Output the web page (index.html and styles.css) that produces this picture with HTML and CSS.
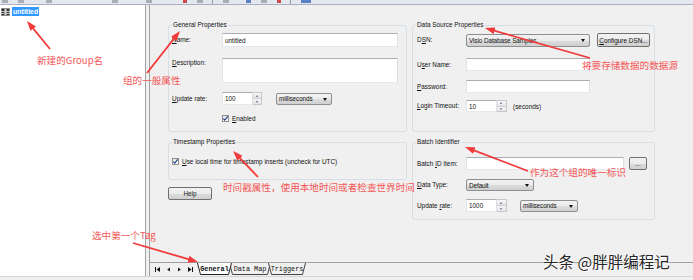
FILE: index.html
```html
<!DOCTYPE html>
<html lang="zh-CN">
<head>
  <meta charset="UTF-8">
  <meta name="viewport" content="width=device-width, initial-scale=1.0">
  <title>Group Properties</title>
  <link rel="stylesheet" href="styles.css">
</head>
<body>
<div class="app">
  <!-- toolbar, only its bottom edge is in view -->
  <div class="toolbar">
    <span class="tb"></span><span class="tb"></span><span class="tb"></span><span class="tb"></span>
    <span class="tb"></span><span class="tb red"></span><span class="tb"></span><span class="tb-sep"></span>
    <span class="tb"></span><span class="tb blue"></span><span class="tb"></span><span class="tb red"></span>
    <span class="tb-sep"></span><span class="tb blue wide"></span>
  </div>

  <div class="main">
    <div class="tree">
      <div class="node">
        <svg class="node-icon" width="9" height="8" viewBox="0 0 9 8">
          <rect x="0" y="0" width="9" height="8" fill="#8a8a8a"/>
          <rect x="1" y="1" width="2" height="6" fill="#222"/>
          <rect x="4" y="1" width="1" height="6" fill="#e0e0e0"/>
          <rect x="6" y="1" width="2" height="6" fill="#333"/>
          <rect x="0" y="3" width="9" height="1" fill="#cfcfcf"/>
          <rect x="0" y="5" width="9" height="1" fill="#bdbdbd"/>
        </svg>
        <span class="node-label">untitled</span>
      </div>
    </div>

    <div class="panel">
      <div class="form">
        <div class="col col-left">
          <div class="group general">
            <span class="group-title">General Properties</span>
            <div class="row r-name">
              <span class="lbl lbl-g"><u>N</u>ame:</span>
              <div class="field w-name">untitled</div>
            </div>
            <div class="row r-desc">
              <span class="lbl lbl-g"><u>D</u>escription:</span>
              <div class="field w-desc"></div>
            </div>
            <div class="row r-rate">
              <span class="lbl lbl-g"><u>U</u>pdate rate:</span>
              <div class="field w-num">100</div>
              <div class="spin"><span class="up"></span><span class="down"></span></div>
              <div class="combo w-ms">milliseconds</div>
            </div>
            <div class="row r-enabled">
              <span class="check">
                <svg width="7" height="7" viewBox="0 0 7 7"><path d="M1.3 3.6 L2.8 5.2 L5.7 1.4" fill="none" stroke="#21418a" stroke-width="1.1"/></svg>
              </span>
              <span class="check-text"><u>E</u>nabled</span>
            </div>
          </div>

          <div class="group timestamp">
            <span class="group-title">Timestamp Properties</span>
            <div class="row r-local">
              <span class="check">
                <svg width="7" height="7" viewBox="0 0 7 7"><path d="M1.3 3.6 L2.8 5.2 L5.7 1.4" fill="none" stroke="#21418a" stroke-width="1.1"/></svg>
              </span>
              <span class="check-text"><u>U</u>se local time for timestamp inserts (uncheck for UTC)</span>
            </div>
          </div>

          <div class="btn help">Help</div>
        </div>

        <div class="col col-right">
          <div class="group dsn">
            <span class="group-title">Data Source Properties</span>
            <div class="row r-dsn">
              <span class="lbl lbl-r">D<u>S</u>N:</span>
              <div class="combo w-dsn">Visio Database Samples</div>
              <div class="btn w-cfg"><u>C</u>onfigure DSN...</div>
            </div>
            <div class="row r-user">
              <span class="lbl lbl-r">U<u>s</u>er Name:</span>
              <div class="field w-wide"></div>
            </div>
            <div class="row r-pass">
              <span class="lbl lbl-r"><u>P</u>assword:</span>
              <div class="field w-wide"></div>
            </div>
            <div class="row r-login">
              <span class="lbl lbl-r"><u>L</u>ogin Timeout:</span>
              <div class="field w-num">10</div>
              <div class="spin wide"><span class="up"></span><span class="down"></span></div>
              <span class="unit">(seconds)</span>
            </div>
          </div>

          <div class="group batch">
            <span class="group-title">Batch Identifier</span>
            <div class="row r-batch">
              <span class="lbl lbl-r">Batch <u>I</u>D Item:</span>
              <div class="field w-batch"></div>
              <div class="btn w-dots">...</div>
            </div>
            <div class="row r-type">
              <span class="lbl lbl-r"><u>D</u>ata Type:</span>
              <div class="combo w-type">Default</div>
            </div>
            <div class="row r-rate2">
              <span class="lbl lbl-r">Update <u>r</u>ate:</span>
              <div class="field w-num">1000</div>
              <div class="spin wide"><span class="up"></span><span class="down"></span></div>
              <div class="combo w-ms2">milliseconds</div>
            </div>
          </div>
        </div>
      </div>

      <div class="tabbar">
        <div class="nav">
          <svg width="5" height="5" viewBox="0 0 5 5"><rect x="0" y="0" width="1" height="5" fill="#111"/><path d="M5 0 L1.5 2.5 L5 5 Z" fill="#111"/></svg>
          <svg width="5" height="5" viewBox="0 0 5 5"><path d="M4 0.5 L1.2 2.5 L4 4.5 Z" fill="#111"/></svg>
          <svg width="5" height="5" viewBox="0 0 5 5"><path d="M1 0.5 L3.8 2.5 L1 4.5 Z" fill="#111"/></svg>
          <svg width="5" height="5" viewBox="0 0 5 5"><path d="M0 0 L3.5 2.5 L0 5 Z" fill="#111"/><rect x="4" y="0" width="1" height="5" fill="#111"/></svg>
        </div>
        <div class="tabs">
          <div class="tab active t-general">
            <svg class="tab-shape" width="35" height="12" viewBox="0 0 35 12"><path d="M0.5 0 L3.5 11.5 L31.5 11.5 L34.5 0" fill="#fff" stroke="#222"/></svg>
            <span class="tab-text">General</span>
          </div>
          <div class="tab t-map">
            <svg class="tab-shape" width="42" height="12" viewBox="0 0 42 12"><path d="M0.5 0 L3.5 11.5 L38.5 11.5 L41.5 0" fill="#f0f0f0" stroke="#444"/></svg>
            <span class="tab-text">Data Map</span>
          </div>
          <div class="tab t-trig">
            <svg class="tab-shape" width="38" height="12" viewBox="0 0 38 12"><path d="M0.5 0 L3.5 11.5 L34.5 11.5 L37.5 0" fill="#f0f0f0" stroke="#444"/></svg>
            <span class="tab-text">Triggers</span>
          </div>
        </div>
      </div>
    </div>
  </div>

  <div class="status"></div>

  <!-- red annotations drawn on top of the screenshot -->
  <svg class="arrows" width="693" height="280" viewBox="0 0 693 280">
    <defs>
      <marker id="head" markerUnits="userSpaceOnUse" markerWidth="10" markerHeight="7" refX="6" refY="3.5" orient="auto" viewBox="0 0 10 7">
        <path d="M0 0 L10 3.5 L0 7 Z" fill="#f23a3a"/>
      </marker>
    </defs>
    <line x1="50" y1="49" x2="29.5" y2="24.1" marker-end="url(#head)"/>
    <line x1="147" y1="73" x2="177.5" y2="34.1" marker-end="url(#head)"/>
    <line x1="590" y1="58" x2="488.8" y2="29.1" marker-end="url(#head)"/>
    <line x1="258" y1="177" x2="235.8" y2="153.9" marker-end="url(#head)"/>
    <line x1="528" y1="171" x2="468.7" y2="148.4" marker-end="url(#head)"/>
    <line x1="133" y1="243" x2="194.2" y2="260.9" marker-end="url(#head)"/>
  </svg>

  <span class="note n-group">新建的Group名</span>
  <span class="note n-general">组的一般属性</span>
  <span class="note n-source">将要存储数据的数据源</span>
  <span class="note n-time">时间戳属性，使用本地时间或者检查世界时间</span>
  <span class="note n-batch">作为这个组的唯一标识</span>
  <span class="note n-tag">选中第一个Tag</span>

  <span class="watermark">头条 @胖胖编程记</span>
</div>
</body>
</html>
```

FILE: styles.css
```css
body {
  margin: 0;
  background: #f0f0f0;
  font-family: "Liberation Sans", Arial, sans-serif;
  font-size: 6.4px;
  color: #111;
}
.app {
  position: relative;
  width: 693px;
  height: 280px;
  overflow: hidden;
  display: flex;
  flex-direction: column;
}

/* toolbar strip */
.toolbar {
  height: 4px;
  background: #e3e7ef;
  border-bottom: 1px solid #a9b0bd;
  display: flex;
  align-items: flex-start;
}
.tb {
  width: 6px;
  height: 3px;
  background: #a8adb6;
  margin-left: 10px;
}
.tb.red { background: #d04848; width: 4px; }
.tb.blue { background: #5a7fc4; width: 5px; }
.tb.wide { width: 10px; }
.tb-sep {
  width: 1px;
  height: 4px;
  background: #9aa1ad;
  margin-left: 9px;
}
.toolbar .tb:first-child { margin-left: 2px; }
.toolbar .tb:nth-child(3) { margin-left: 22px; }
.toolbar .tb:nth-child(4) { margin-left: 60px; }
.toolbar .tb:nth-child(5) { margin-left: 28px; }
.toolbar .tb:nth-child(6) { margin-left: 31px; }
.toolbar .tb:nth-child(9) { margin-left: 10px; }
.toolbar .tb:nth-child(10) { margin-left: 17px; }

/* main split */
.main {
  height: 271px;
  display: flex;
  gap: 3px;
}
.tree {
  width: 146px;
  box-sizing: border-box;
  background: #fff;
  border-right: 1px solid #a0a0a0;
  padding: 2px 0 0 1px;
}
.node {
  display: flex;
  align-items: center;
  height: 9px;
}
.node-icon { display: block; }
.node-label {
  margin-left: 2px;
  background: #3399ff;
  color: #fff;
  font-weight: bold;
  font-size: 7px;
  line-height: 9px;
  padding: 0 1px;
}

.panel {
  flex: 1;
  display: flex;
  flex-direction: column;
  border-left: 1px solid #a0a0a0;
}
.form {
  flex: 1;
  display: flex;
  gap: 5px;
  padding: 20px 0 0 18px;
}
.col {
  display: flex;
  flex-direction: column;
  align-items: flex-start;
}
.col-left { width: 239px; }
.col-right { width: 243px; }

/* group boxes */
.group {
  position: relative;
  box-sizing: border-box;
  width: 100%;
  border: 1px solid #d5dfe5;
  border-radius: 3px;
}
.group-title {
  position: absolute;
  top: -5px;
  left: 3px;
  padding: 0 1px;
  background: #f0f0f0;
  line-height: 8px;
}
.general { height: 107px; padding: 7px 0 0 3px; }
.timestamp { height: 38px; margin-top: 10px; padding: 15px 0 0 3px; }
.dsn { height: 107px; padding: 7px 0 0 4px; }
.batch { height: 78px; margin-top: 10px; padding: 14px 0 0 4px; }

.row {
  display: flex;
  align-items: center;
}
.lbl { line-height: 8px; }
.lbl-g { width: 50px; }
.lbl-r { width: 49px; }

.r-name { height: 14px; }
.r-desc { height: 25px; margin-top: 11px; align-items: flex-start; }
.r-desc .lbl { margin-top: 1px; }
.r-rate { height: 13px; margin-top: 9px; }
.r-enabled { height: 9px; margin-top: 9px; padding-left: 50px; }
.r-local { height: 7px; }

.r-dsn { height: 14px; }
.r-user { height: 13px; margin-top: 11px; }
.r-pass { height: 13px; margin-top: 9px; }
.r-login { height: 12px; margin-top: 7px; }
.r-batch { height: 13px; }
.r-type { height: 12px; margin-top: 9px; }
.r-rate2 { height: 13px; margin-top: 8px; }

/* controls */
.field {
  box-sizing: border-box;
  height: 100%;
  background: #fff;
  border: 1px solid #abadb3;
  border-color: #abadb3 #dbdfe6 #e3e9ef #e2e3ea;
  padding: 0 2px;
  display: flex;
  align-items: center;
}
.w-name { width: 176px; }
.w-desc { width: 176px; }
.w-num { width: 31px; }
.w-wide { width: 124px; }
.w-batch { width: 158px; }

.spin {
  box-sizing: border-box;
  width: 9px;
  height: 100%;
  display: flex;
  flex-direction: column;
  border: 1px solid #c8c8c8;
  border-left: none;
}
.spin.wide { width: 10px; }
.spin span {
  flex: 1;
  position: relative;
  background: linear-gradient(#f7f7f7, #e3e3e3);
}
.spin span + span { border-top: 1px solid #d0d0d0; }
.spin span::after {
  content: "";
  position: absolute;
  left: 50%;
  top: 50%;
  margin: -1px 0 0 -1.5px;
  border-left: 1.5px solid transparent;
  border-right: 1.5px solid transparent;
}
.spin .up::after { border-bottom: 2px solid #5a6b8c; }
.spin .down::after { border-top: 2px solid #5a6b8c; }

.combo {
  position: relative;
  box-sizing: border-box;
  height: 100%;
  border: 1px solid #8e8f8f;
  border-radius: 2px;
  background: linear-gradient(#f2f2f2 0%, #ebebeb 50%, #dddddd 51%, #cfcfcf 100%);
  padding: 0 10px 0 2px;
  display: flex;
  align-items: center;
  white-space: nowrap;
  overflow: hidden;
  letter-spacing: -0.1px;
}
.combo::after {
  content: "";
  position: absolute;
  right: 4px;
  top: 50%;
  margin-top: -1px;
  border-left: 2.5px solid transparent;
  border-right: 2.5px solid transparent;
  border-top: 3px solid #111;
}
.w-ms { width: 56px; height: 12px; margin-left: 14px; }
.w-dsn { width: 124px; height: 13px; }
.w-type { width: 68px; }
.w-ms2 { width: 58px; height: 12px; margin-left: 13px; }

.btn {
  box-sizing: border-box;
  border: 1px solid #707070;
  border-radius: 2px;
  background: linear-gradient(#f2f2f2 0%, #ebebeb 50%, #dddddd 51%, #cfcfcf 100%);
  display: flex;
  align-items: center;
  justify-content: center;
  white-space: nowrap;
}
.help { width: 44px; height: 13px; margin-top: 7px; }
.w-cfg { width: 53px; height: 14px; margin-left: 7px; }
.w-dots { width: 18px; height: 13px; margin-left: 5px; }

.unit { margin-left: 6px; }

.check {
  box-sizing: border-box;
  width: 7px;
  height: 7px;
  border: 1px solid #8e8f8f;
  background: linear-gradient(#e6e6e6, #ffffff);
  display: flex;
  align-items: center;
  justify-content: center;
}
.check svg { display: block; flex: none; }
.check-text { margin-left: 3px; }

/* sheet tabs */
.tabbar {
  height: 13px;
  border-top: 1px solid #a0a0a0;
  display: flex;
  align-items: flex-start;
  padding-left: 5px;
}
.nav {
  display: flex;
  gap: 6px;
  margin-top: 4px;
}
.nav svg { display: block; }
.tabs {
  display: flex;
  margin-left: 4px;
}
.tab {
  position: relative;
  height: 12px;
  display: flex;
  align-items: center;
  justify-content: center;
  font-family: "Liberation Mono", "Courier New", monospace;
  font-size: 6.8px;
}
.tab + .tab { margin-left: -3px; }
.tab-shape {
  position: absolute;
  top: 0;
  left: 0;
}
.tab-text { position: relative; }
.tab.active { z-index: 2; }
.tab.active .tab-text { font-weight: bold; }
.t-general { width: 35px; }
.t-map { width: 42px; }
.t-trig { width: 38px; }

.status {
  height: 3px;
  border-top: 1px solid #d4d4d4;
  background: #f0f0f0;
}

/* annotations */
.arrows {
  position: absolute;
  top: 0;
  left: 0;
  pointer-events: none;
}
.arrows line {
  stroke: #f23a3a;
  stroke-width: 1.8;
}
.note {
  position: absolute;
  color: #f45757;
  font-family: "Noto Sans CJK SC", "Noto Sans", sans-serif;
  font-size: 9.6px;
  line-height: 12px;
  white-space: nowrap;
}
.n-group { left: 37px; top: 54px; }
.n-general { left: 123px; top: 74px; }
.n-source { left: 582px; top: 59px; }
.n-time { left: 223px; top: 181px; }
.n-batch { left: 530px; top: 166px; }
.n-tag { left: 92px; top: 229px; }

.watermark {
  position: absolute;
  left: 543px;
  top: 251px;
  color: #262626;
  font-family: "Noto Sans CJK SC", sans-serif;
  font-size: 15.5px;
  line-height: 20px;
  white-space: nowrap;
  text-shadow: 0 0 1px #fff, 0 0 2px #fff, 1px 1px 0 #fff;
}
```
